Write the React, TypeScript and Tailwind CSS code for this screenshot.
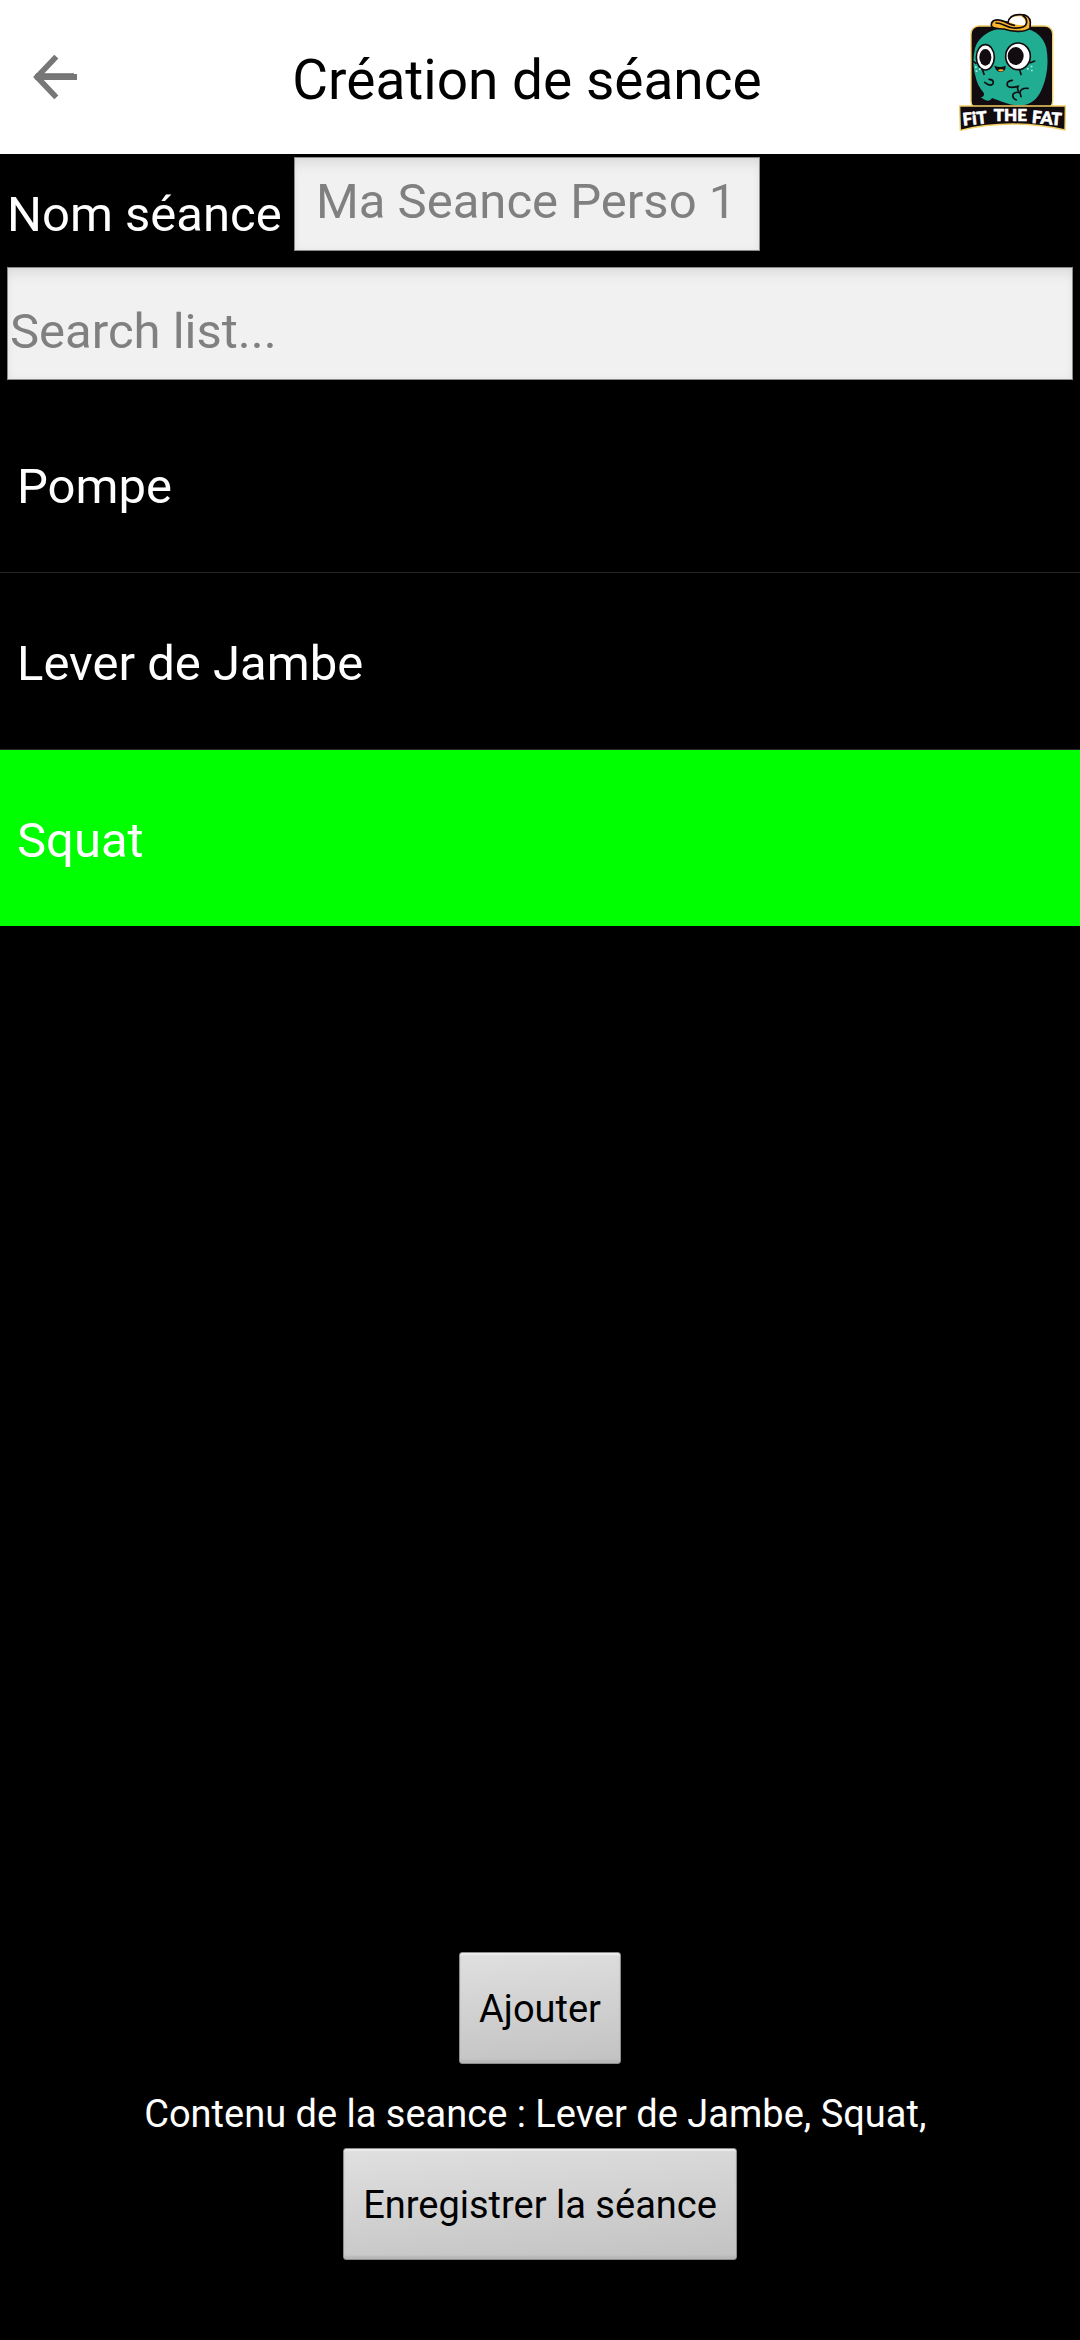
import { useState } from "react";

const EXERCISES = ["Pompe", "Lever de Jambe", "Squat"];

function BackArrow() {
  return (
    <svg viewBox="99 75 132 132" className="h-11 w-11" fill="none" stroke="#777777" aria-hidden="true">
      <path d="M106 141H231" strokeWidth="18" />
      <path d="M108 132H222" stroke="#6f6f6f" strokeWidth="5" />
      <path d="M169 80L111 141L169 202" strokeWidth="17" />
    </svg>
  );
}

function Logo() {
  return (
    <svg viewBox="57 38 321 354" className="h-[118px] w-[107px]" role="img" aria-label="Fit The Fat">
      {/* frame */}
      <rect x="93" y="77" width="245" height="250" rx="24" fill="#120b10" stroke="#f2cf63" strokeWidth="4" />
      {/* body */}
      <path
        d="M104 150C112 108 152 84 208 80C268 76 308 98 319 142C327 186 322 236 300 278C284 306 262 316 236 315C204 314 182 302 156 293C152 301 143 304 136 299C129 296 124 292 122 291C131 289 134 283 131 277C118 263 110 246 106 226C99 200 99 174 104 150Z"
        fill="#21ad91"
      />
      {/* eyes */}
      <ellipse cx="136" cy="171" rx="27" ry="38" fill="#fff" stroke="#120b10" strokeWidth="5" />
      <ellipse cx="136" cy="171" rx="18" ry="25" fill="#120b10" />
      <ellipse cx="234" cy="168" rx="37" ry="40" fill="#fff" stroke="#120b10" strokeWidth="5" />
      <ellipse cx="227" cy="167" rx="24" ry="27" fill="#120b10" />
      {/* mouth */}
      <path d="M163 196Q180 204 197 196Q197 215 181 215Q167 213 163 196Z" fill="#120b10" />
      <path d="M173 209Q183 204 192 209Q184 218 173 209Z" fill="#f6b62d" />
      <g fill="none" stroke="#120b10" strokeWidth="5" strokeLinecap="round">
        <path d="M101 184L108 189M127 207L132 222M271 187L284 182M239 209L243 222" />
        <path d="M147 237Q160 237 160 247Q158 257 145 253L134 246" />
        <path d="M217 240Q199 241 202 256Q209 265 234 258Q231 265 235 272" />
        <path d="M264 264Q242 262 240 277Q226 273 219 282Q216 294 229 299M240 277L243 289" />
      </g>
      <g fill="#a9f0e2">
        <path d="M105 198h5v5h-5zM117 204h5v5h-5zM107 210h5v5h-5z" />
        <path d="M261 203h5v5h-5zM272 196h5v5h-5zM273 208h5v5h-5z" />
      </g>
      {/* cap */}
      <path
        d="M204 67C207 49 222 42 244 43C260 43 270 52 271 65L270 84C253 96 219 96 192 86C174 84 155 87 154 75C153 60 168 56 182 60Z"
        fill="#f8b72d"
        stroke="#120b10"
        strokeWidth="5"
        strokeLinejoin="round"
      />
      <path d="M207 65C211 51 223 46 244 48Q260 60 256 74Q230 77 207 65Z" fill="#fff" />
      <path
        d="M168 68C187 67 198 82 219 83C239 84 257 80 259 70Q263 54 249 46M196 65Q208 72 223 75"
        fill="none"
        stroke="#120b10"
        strokeWidth="5"
        strokeLinecap="round"
      />
      {/* banner */}
      <path
        d="M59 317H376L375 389Q297 371 217 371Q138 371 61 390Z"
        fill="#120b10"
        stroke="#f2cf63"
        strokeWidth="4"
      />
      <g
        fill="#fff"
        stroke="#fff"
        strokeWidth="2"
        fontFamily="Lato, sans-serif"
        fontWeight="900"
        fontSize="51"
        textAnchor="middle"
      >
        <text x="106" y="372" transform="rotate(-6 106 372)">
          FiT
        </text>
        <text x="211" y="363">
          THE
        </text>
        <text x="319" y="371" transform="rotate(5 319 371)">
          FAT
        </text>
      </g>
    </svg>
  );
}

const inputStyle =
  "border border-[#8a8a8a] bg-[#f1f1f1] text-[49px] text-[#222222] outline-none placeholder:text-[#808080] placeholder:opacity-100 shadow-[inset_0_12px_14px_-8px_#d8d8d8,inset_0_0_6px_#e4e4e4]";

const buttonStyle =
  "h-28 rounded-[3px] border border-[#8c8c8c] bg-linear-175 from-[#e0e0e0] to-[#c2c2c2] px-[19px] pt-0.5 text-[38px] text-black shadow-[inset_0_2px_1px_#ececec,inset_0_-3px_2px_#b8b8b8]";

export default function App() {
  const [name, setName] = useState("");
  const [search, setSearch] = useState("");
  const [selected, setSelected] = useState("Squat");
  const [content, setContent] = useState(["Lever de Jambe", "Squat"]);

  const visible = EXERCISES.filter((exercise) => exercise.toLowerCase().includes(search.toLowerCase()));

  return (
    <div className="flex min-h-screen flex-col bg-black font-[Roboto,sans-serif] text-white">
      <header className="flex h-[154px] items-center bg-white pr-3.5 text-black">
        <button type="button" aria-label="Retour" className="pr-[18px] pl-[33px]">
          <BackArrow />
        </button>
        <h1 className="flex-1 pt-1.5 text-center text-[55px] leading-[64px]">Création de séance</h1>
        <div className="mt-[13px] self-start">
          <Logo />
        </div>
      </header>

      <main>
        <div className="flex items-start px-[7px] pt-[3px]">
          <label htmlFor="session-name" className="mt-7 w-[287px] text-[49px] leading-[60px] whitespace-nowrap">
            Nom séance
          </label>
          <input
            id="session-name"
            value={name}
            onChange={(event) => setName(event.target.value)}
            placeholder="Ma Seance Perso 1"
            className={`h-[94px] w-[466px] px-[21px] pb-1.5 ${inputStyle}`}
          />
        </div>
        <div className="mt-4 px-[7px]">
          <input
            type="text"
            aria-label="Search list"
            value={search}
            onChange={(event) => setSearch(event.target.value)}
            placeholder="Search list..."
            className={`block h-[113px] w-full px-0.5 pt-4 ${inputStyle}`}
          />
        </div>
        <ul className="mt-4 divide-y divide-[#242424]">
          {visible.map((exercise) => (
            <li key={exercise}>
              <button
                type="button"
                onClick={() => setSelected(exercise)}
                className={`block h-44 w-full px-[17px] pt-1.5 text-left text-[49px] ${
                  exercise === selected ? "bg-[#00ff00]" : "bg-black"
                }`}
              >
                {exercise}
              </button>
            </li>
          ))}
        </ul>
      </main>

      <footer className="mt-auto flex flex-col items-center pb-20">
        <button type="button" onClick={() => setContent([...content, selected])} className={buttonStyle}>
          Ajouter
        </button>
        <p className="mt-6 mb-2 text-[38px] leading-[52px] whitespace-pre">
          {`Contenu de la seance : ${content.map((item) => `${item}, `).join("")}`}
        </p>
        <button type="button" className={buttonStyle}>
          Enregistrer la séance
        </button>
      </footer>
    </div>
  );
}
